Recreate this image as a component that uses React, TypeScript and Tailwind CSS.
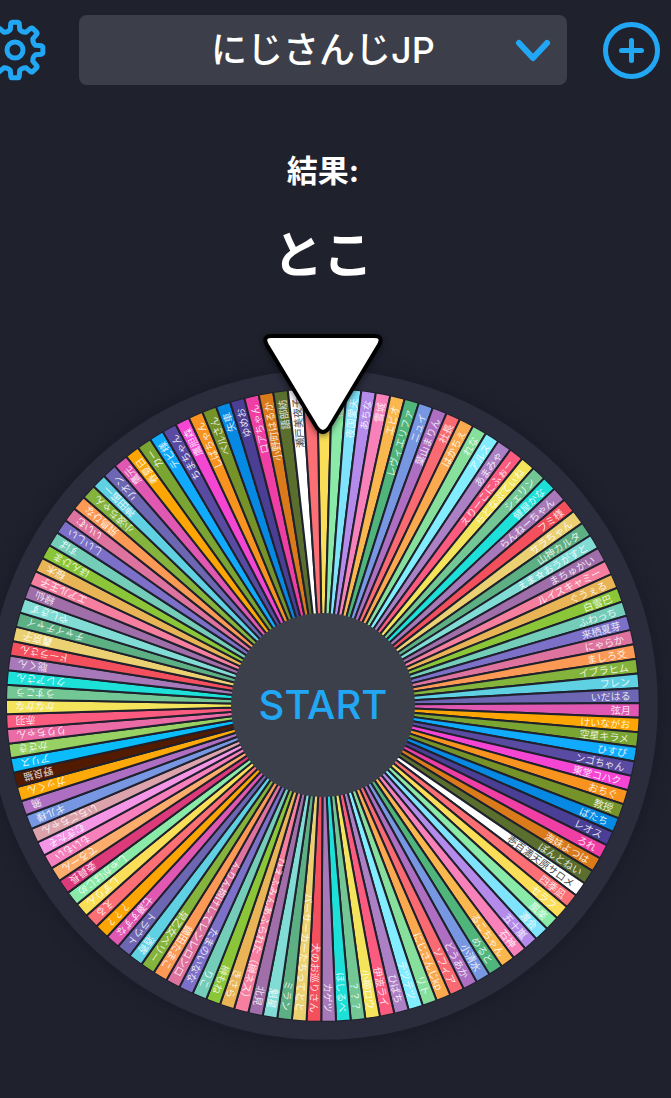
import { useState } from 'react';

const COLORS = [
  '#fb6f75', '#fade58', '#8aeaa8', '#7fe3fb', '#b48aeb', '#f981ba', '#fab74e', '#4fb57a', '#7797e3', '#ae6fc2',
  '#f96a72', '#fba94f', '#86e09c', '#82edff', '#ab80c5', '#fb5b7f', '#f3e45c', '#72c795', '#1de0d9', '#a879b9',
  '#f34f5c', '#ebd172', '#5cb083', '#82dcd6', '#a06ea9', '#f67f9f', '#e8b455', '#8bc638', '#73cdb9', '#7c70c9',
  '#df739f', '#fc9a55', '#84b43b', '#60d0e3', '#6d66b3', '#e058b2', '#fda603', '#7ba532', '#10abfd', '#5a4ba2',
  '#f545d3', '#f7931e', '#76932a', '#0589e3', '#4a3f95', '#ef3fa4', '#db7a1b', '#5a6e2e', '#ffffff',
];

const NAMES = [
  'とこ', '樋口', '夜国愛夫', 'あちな', '雪城', 'エビオ', 'レヴィエリファ', 'ニュイ', '葉山まりん', '社長',
  'はかちぇ', 'れな', 'アルス', 'あまみゃ', 'えりーこにふぉー', 'らとなぷてぃね', 'シェリン', '健屋かな', 'らんねーちゃん', 'フミ様',
  'サラちゃん', '山神カルタ', 'えま☆おうがすと', 'まちゅかい', 'ルイスキャミー', 'ぐうぇる', '白雪巴', 'ふわっち', '来栖夏芽', 'にゃらか',
  'ましろ爻', 'イブラヒム', 'フレン', 'いだはる', '弦月', 'けいながお', '空星キラメ', 'ひすぴ', 'ンゴちゃん', '東堂コハク',
  'おちぐ', '教授', 'ばたち', 'レオス', 'ろれ', '海妹よつは', 'ぽんとねい', '壱百満天原サロメ', '四季凪', 'セラフ',
  '風楽', '渡会', '五十嵐', '石神', 'るこちゃん', 'めると', '小清水', 'どうあか', 'ソフィア', 'にじさんじkp',
  'リト', 'テツテツ', 'ひばち', '伊波ライ', '小柳ロウ', '？？？', 'ほしるべ', 'カゲツ', '犬のお巡りさん', 'バーサーカーたちってとと',
  'ミラン', '魁星', '北見', 'ひえふみんあふられた（榊ネス）', 'きさら', '榊もね', 'りこ', 'たまのいなな', 'んりん抱けしてレンレロンロ', '鏑田たまこ',
  '早乙女ベリー', '酒寄', 'トラウト', '七瀬すずな', '？？？', 'える', 'しずりん', 'しゃがはじめ', '委員長', 'でろーん',
  'もいもい', 'むぎたそ', 'いちごちゃん', 'ギル様', '鴉', 'ガッくん', '野良猫', 'アリス', 'かざき', 'りりちゃん',
  '赤羽', 'かなかな', 'うすこう', 'クレアさん', '聡くん', 'ドーラさん', '轟京子', 'チャイチャイ', 'やしきず', '緑仙',
  'エアル王子', '桜木', 'ほんひま', 'すば', 'しいしい', 'いいむ', '飛鳥ひな', '小波ちゃん', '神田笛一', 'リオン',
  '鷹元', '春夏日', 'カー', 'テビ様', 'ちまちゃん', '鷹胆森', 'しばちゃん', 'ベルさん', '矢車', 'ゆめお',
  'ロアちゃん', '小野町はるか', '語部紡', '瀬戸美夜子', 'ア',
];

// a few members have their own colour instead of the next one in the cycle
const OWN_COLORS: Record<number, string> = {
  85: '#fb6f75',
  86: '#fade58',
  87: '#8aeaa8',
  88: '#dd3a7c',
  89: '#fcac6b',
  90: '#f77fbb',
  91: '#f495e6',
  92: '#dca3ac',
  93: '#7797e3',
  94: '#ae6fc2',
  95: '#fda90a',
  96: '#521b00',
  97: '#0bbcfb',
  98: '#97d163',
  99: '#ea6ba5',
};

function colorOf(i: number) {
  if (OWN_COLORS[i]) return OWN_COLORS[i];
  if (i < 48) return COLORS[i + 1];
  if (i < 85) return COLORS[i - 48];
  if (i < 134) return COLORS[i - 85];
  return COLORS[0];
}

const OUTER = 317;
const INNER = 90;
const STEP = 360 / NAMES.length;
// where the last spin came to rest
const SPIN = 0.3;

function polar(r: number, deg: number) {
  const a = (deg * Math.PI) / 180;
  return `${(r * Math.sin(a)).toFixed(2)} ${(-r * Math.cos(a)).toFixed(2)}`;
}

function slicePath(i: number) {
  const from = (i - 0.5) * STEP;
  const to = (i + 0.5) * STEP;
  return `M${polar(INNER, from)} L${polar(OUTER, from)} A${OUTER} ${OUTER} 0 0 1 ${polar(OUTER, to)} L${polar(INNER, to)} Z`;
}

function gearPath() {
  let d = '';
  for (let a = 0; a < 360; a += 45) {
    d += `${a === 0 ? 'M' : 'L'}${polar(21, a - 13)} L${polar(27, a - 9)} Q${polar(28, a - 8)} ${polar(28, a - 6)} L${polar(28, a + 6)} Q${polar(28, a + 8)} ${polar(27, a + 9)} L${polar(21, a + 13)} Q${polar(19, a + 22.5)} ${polar(21, a + 32)} `;
  }
  return d + 'Z';
}

function Header() {
  const [list, setList] = useState('jp');
  return (
    <header className="-ml-4 flex items-center pr-[11px] pt-[15px]">
      <button aria-label="設定" className="size-[62px] shrink-0 text-[#22a7f5]">
        <svg viewBox="-31 -31 62 62" fill="none" stroke="currentColor" strokeWidth="5" strokeLinejoin="round">
          <path d={gearPath()} />
          <circle r="8" />
        </svg>
      </button>
      <div className="relative ml-[33px] mr-9 flex-1">
        <select
          aria-label="ルーレット"
          value={list}
          onChange={e => setList(e.target.value)}
          className="block h-[70px] w-full appearance-none rounded-lg bg-[#3c3f4a] px-12 text-center text-[36px] font-medium text-white"
        >
          <option value="jp">にじさんじJP</option>
        </select>
        <svg className="pointer-events-none absolute right-4 top-6 h-6 w-9 text-[#22a7f5]" viewBox="0 0 36 24" fill="none" stroke="currentColor" strokeWidth="6" strokeLinecap="round" strokeLinejoin="round">
          <path d="M4 4 L18 19 L32 4" />
        </svg>
      </div>
      <button aria-label="追加" className="size-[57px] shrink-0 text-[#22a7f5]">
        <svg viewBox="0 0 57 57" fill="none" stroke="currentColor" strokeWidth="5" strokeLinecap="round">
          <circle cx="28.5" cy="28.5" r="26" />
          <path d="M28.5 18.5v20M18.5 28.5h20" />
        </svg>
      </button>
    </header>
  );
}

function Wheel() {
  return (
    <div className="relative grid aspect-square w-[104%] shrink-0 place-items-center">
      <svg className="absolute inset-0 size-full overflow-visible" viewBox="-336 -336 672 672">
        <circle r="335" fill="#2b2c3c" className="drop-shadow-[0_0_10px_rgba(10,15,25,0.4)]" />
        <g transform={`rotate(${SPIN})`}>
          {NAMES.map((name, i) => (
            <g key={i}>
              <path d={slicePath(i)} fill={colorOf(i)} stroke="#1f212d" strokeWidth="2" />
              <text
                x="308"
                transform={`rotate(${i * STEP - 90})`}
                textAnchor="end"
                dominantBaseline="central"
                fontSize="10"
                fill={colorOf(i) === '#ffffff' ? '#222222' : '#ffffff'}
                fillOpacity="0.85"
              >
                {name}
              </text>
            </g>
          ))}
        </g>
        <circle r={OUTER + 1} fill="none" stroke="#2b2c3c" strokeWidth="2" />
        <path
          d="M-51 -369 H51 Q61 -369 56 -360 L6 -277 Q0 -269 -6 -277 L-56 -360 Q-61 -369 -51 -369 Z"
          fill="#ffffff"
          stroke="#000000"
          strokeWidth="4"
          className="drop-shadow-[0_2px_3px_rgba(0,0,0,0.5)]"
        />
      </svg>
      <button className="relative aspect-square w-[27.4%] rounded-full bg-[#3c404b] font-['Inter','Liberation_Sans',sans-serif] text-[40px] font-medium text-[#22a7f5]">
        START
      </button>
    </div>
  );
}

export default function App() {
  return (
    <div className="min-h-screen overflow-hidden bg-[#1f212d] font-['Inter','Noto_Sans_CJK_JP',sans-serif] text-white">
      <Header />
      <main className="flex flex-col items-center pb-14 pr-[25px]">
        <h2 className="mt-16 text-[31px] font-bold leading-[44px]">結果:</h2>
        <p className="mt-7 text-[50px] font-bold leading-[68px]">とこ</p>
        <div className="mt-20 flex w-full justify-center">
          <Wheel />
        </div>
      </main>
    </div>
  );
}
